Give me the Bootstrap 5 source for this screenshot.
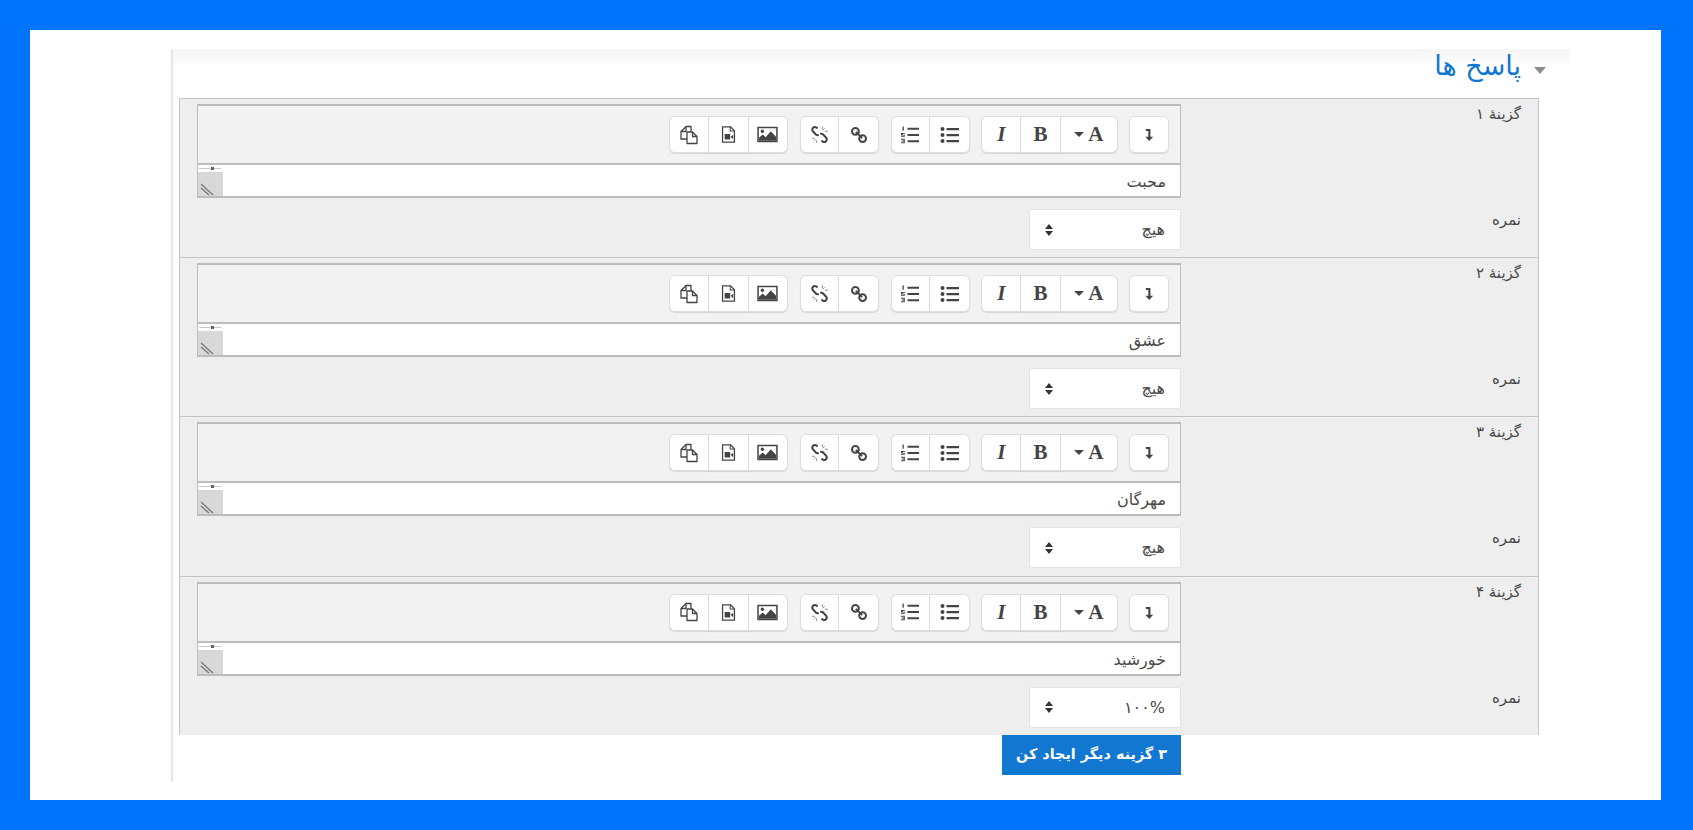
<!DOCTYPE html>
<html lang="fa" dir="rtl">
<head>
<meta charset="utf-8">
<title>پاسخ ها</title>
<link href="https://cdn.jsdelivr.net/npm/bootstrap@5.3.0/dist/css/bootstrap.min.css" rel="stylesheet">
<style>
html,body{height:100%;}
body{background:#0074fb;padding:30px 32px 30px 30px;font-family:"DejaVu Sans",sans-serif;color:#4a4a4a;font-size:15px;overflow:hidden;}
.sheet{background:#fff;height:770px;padding:19px 91px 0 141px;}
.panel-q{height:733px;border-left:2px solid #e6e6e6;background:linear-gradient(#f6f6f6,#fbfbfb 14px,#fff 15px);}
.legend-q{height:49px;padding-right:24px;color:#1177d1;font-size:27px;line-height:34px;}
.legend-q svg{margin:18px 0 0 13px;flex:none;}
.fields{margin:0 31px 0 6px;border-left:1px solid #c4c4c4;border-right:1px solid #c4c4c4;background:#eee;}
.opt{height:159.2px;border-top:1px solid #c4c4c4;padding:5px 0 0 17px;}
.lab{width:357px;flex:none;padding-right:17px;line-height:20px;}
.lab-grade{padding-top:12px;margin-top:0;}
.ed{width:984px;flex:none;border:1px solid #bcbcbc;border-width:2px 1px 2px 1px;}
.tools{height:59px;background:#f2f2f2;border-bottom:2px solid #bcbcbc;padding:10px 11px 0 0;gap:11.5px;}
.tool{width:39.7px;height:37px;padding:0;background:#fff;color:#444;border:1px solid #dedede;box-shadow:0 1px 1px rgba(0,0,0,.12);display:flex;align-items:center;justify-content:center;font-family:"Liberation Serif",serif;font-size:21px;line-height:1;}
.btn-group>.btn.tool+.btn.tool{margin-left:0;border-left-width:0;}
.tool-wide{width:57px;gap:4px;}
.caret-a{border-top:5px solid #444;border-left:5px solid transparent;border-right:5px solid transparent;}
.ed-body{height:31px;background:#fff;}
.ed-text{padding:3px 14px 0 0;line-height:28px;font-size:16px;}
.grip{flex:none;width:25px;height:31px;display:block;}
.grade{width:152px;height:41px;margin-top:11px;padding:0 15px 0 10px;border:1px solid #e4e4e4;border-radius:2px;background:#fff url("data:image/svg+xml,%3Csvg xmlns='http://www.w3.org/2000/svg' width='8' height='12'%3E%3Cpath fill='%23333' d='M4 0l4 5H0zM4 12L0 7h8z'/%3E%3C/svg%3E") no-repeat 15px center;appearance:none;color:#4a4a4a;font:16px "DejaVu Sans",sans-serif;}
.more-wrap{padding-right:389px;}
.more{width:179px;height:40px;background:#1177d1;border:0;border-radius:0;color:#fff;font-size:14.4px;font-weight:700;padding:0;}
</style>
</head>
<body>
<svg width="0" height="0" class="d-none">
<defs>
<symbol id="i-copy" viewBox="0 0 20 20"><g fill="none" stroke="currentColor" stroke-width="1.300" stroke-linejoin="round"><path d="M7 1.500h5v6M7 1.500 2 6.500V14h6"/><path d="M7 1.500v5H2"/><path d="M13.500 7H8v11.500h10V11.500z" fill="#fff"/><path d="M13.500 7v4.500H18"/></g></symbol>
<symbol id="i-video" viewBox="0 0 20 20"><path d="M3 1h9.500L17 5.500V19H3z" fill="none" stroke="currentColor" stroke-width="1.500"/><path d="M12 1v5h5" fill="none" stroke="currentColor" stroke-width="1.200"/><path d="M5.500 9.500h6.500v6.500H5.500zM12.500 12.700l3-2.500v5.500z" fill="currentColor"/></symbol>
<symbol id="i-img" viewBox="0 0 22 18"><path d="M1 1.500h20v15H1z" fill="#fff" stroke="currentColor" stroke-width="1.600"/><circle cx="5.500" cy="5.500" r="1.800" fill="currentColor"/><path d="M2 15.500v-3l4-3.500 3 3 5.500-6.500 5.500 6v4z" fill="currentColor"/></symbol>
<symbol id="i-unlink" viewBox="0 0 20 20"><g fill="none" stroke="currentColor" stroke-width="2.200"><path d="M8 3.500 6.500 2.500a2.800 2.800 0 0 0-3.800 3.800l3.500 3.700a2.800 2.800 0 0 0 3 .6"/><path d="M12 16.500l1.500 1a2.800 2.800 0 0 0 3.800-3.800l-3.500-3.700a2.800 2.800 0 0 0-3-.6"/></g><g stroke="#8b8b8b" stroke-width="1"><path d="M13 1.500v3M15.500 3.500l-2 2M19 6.500h-3.500M2 14h3M4 17l2-2M7 19v-3"/></g></symbol>
<symbol id="i-link" viewBox="0 0 20 20"><g fill="none" stroke="currentColor" stroke-width="2.200"><circle cx="6" cy="6" r="3.800"/><circle cx="14" cy="14" r="3.800"/><path d="M6.500 6.500l7 7"/></g></symbol>
<symbol id="i-ol" viewBox="0 0 20 18"><path fill="currentColor" d="M7.500 1.800H19v2H7.500zM7.500 8H19v2H7.500zM7.500 14.200H19v2H7.500zM2.500.6h1.300v4.200H2.500zM1 7h3.800v1H2.800v1h2v1.800H1v-1h2.800v-.5H1zM1 12.800h3.800v4.400H1v-1h2.800v-.7H1.800v-1h2v-.7H1z"/></symbol>
<symbol id="i-ul" viewBox="0 0 20 18"><path fill="currentColor" d="M6.500 2H19v2.200H6.500zM6.500 8H19v2.200H6.500zM6.500 14H19v2.200H6.500z"/><circle cx="2.500" cy="3.100" r="2" fill="currentColor"/><circle cx="2.500" cy="9.100" r="2" fill="currentColor"/><circle cx="2.500" cy="15.100" r="2" fill="currentColor"/></symbol>
<symbol id="i-coll" viewBox="0 0 12 16"><path fill="currentColor" d="M2 2h5v8.500h3L5.700 15 1.500 10.500h3.200V4.200H2z"/></symbol>
<symbol id="i-grip" viewBox="0 0 25 31"><rect width="25" height="31" fill="#fff"/><rect y="7" width="25" height="24" fill="#d8d8d8"/><path d="M1 3.500h22" stroke="#c8c8c8"/><rect x="13" y="2" width="3" height="3" fill="#666"/><path d="M3 19 15 30M3 23 11 30" stroke="#777" stroke-width="1.200"/></symbol>
</defs>
</svg>
<main class="sheet">
<section class="panel-q">
<h2 class="legend-q d-flex align-items-start m-0 fw-normal"><svg width="12" height="7" viewBox="0 0 12 7" aria-hidden="true"><path d="M0 0h12L6 7z" fill="#8e8e8e"/></svg><span>پاسخ ها</span></h2>
<div class="fields">

<div class="opt">
<div class="d-flex"><div class="lab">گزینهٔ ۱</div><div class="ed">
<div class="tools d-flex justify-content-end" dir="ltr">
<div class="btn-group"><button class="btn tool"><svg width="20" height="20"><use href="#i-copy"/></svg></button><button class="btn tool"><svg width="17" height="17"><use href="#i-video"/></svg></button><button class="btn tool"><svg width="21" height="17"><use href="#i-img"/></svg></button></div>
<div class="btn-group"><button class="btn tool"><svg width="19" height="19"><use href="#i-unlink"/></svg></button><button class="btn tool"><svg width="18" height="18"><use href="#i-link"/></svg></button></div>
<div class="btn-group"><button class="btn tool"><svg width="20" height="18"><use href="#i-ol"/></svg></button><button class="btn tool"><svg width="20" height="18"><use href="#i-ul"/></svg></button></div>
<div class="btn-group"><button class="btn tool fst-italic fw-bold">I</button><button class="btn tool fw-bold">B</button><button class="btn tool tool-wide fw-bold"><span class="caret-a"></span>A</button></div>
<div class="btn-group"><button class="btn tool"><svg width="11" height="15"><use href="#i-coll"/></svg></button></div>
</div>
<div class="ed-body d-flex justify-content-between"><div class="ed-text">محبت</div><svg class="grip"><use href="#i-grip"/></svg></div>
</div></div>
<div class="d-flex"><div class="lab lab-grade">نمره</div><select class="grade"><option>هیچ</option></select></div>
</div>

<div class="opt">
<div class="d-flex"><div class="lab">گزینهٔ ۲</div><div class="ed">
<div class="tools d-flex justify-content-end" dir="ltr">
<div class="btn-group"><button class="btn tool"><svg width="20" height="20"><use href="#i-copy"/></svg></button><button class="btn tool"><svg width="17" height="17"><use href="#i-video"/></svg></button><button class="btn tool"><svg width="21" height="17"><use href="#i-img"/></svg></button></div>
<div class="btn-group"><button class="btn tool"><svg width="19" height="19"><use href="#i-unlink"/></svg></button><button class="btn tool"><svg width="18" height="18"><use href="#i-link"/></svg></button></div>
<div class="btn-group"><button class="btn tool"><svg width="20" height="18"><use href="#i-ol"/></svg></button><button class="btn tool"><svg width="20" height="18"><use href="#i-ul"/></svg></button></div>
<div class="btn-group"><button class="btn tool fst-italic fw-bold">I</button><button class="btn tool fw-bold">B</button><button class="btn tool tool-wide fw-bold"><span class="caret-a"></span>A</button></div>
<div class="btn-group"><button class="btn tool"><svg width="11" height="15"><use href="#i-coll"/></svg></button></div>
</div>
<div class="ed-body d-flex justify-content-between"><div class="ed-text">عشق</div><svg class="grip"><use href="#i-grip"/></svg></div>
</div></div>
<div class="d-flex"><div class="lab lab-grade">نمره</div><select class="grade"><option>هیچ</option></select></div>
</div>

<div class="opt">
<div class="d-flex"><div class="lab">گزینهٔ ۳</div><div class="ed">
<div class="tools d-flex justify-content-end" dir="ltr">
<div class="btn-group"><button class="btn tool"><svg width="20" height="20"><use href="#i-copy"/></svg></button><button class="btn tool"><svg width="17" height="17"><use href="#i-video"/></svg></button><button class="btn tool"><svg width="21" height="17"><use href="#i-img"/></svg></button></div>
<div class="btn-group"><button class="btn tool"><svg width="19" height="19"><use href="#i-unlink"/></svg></button><button class="btn tool"><svg width="18" height="18"><use href="#i-link"/></svg></button></div>
<div class="btn-group"><button class="btn tool"><svg width="20" height="18"><use href="#i-ol"/></svg></button><button class="btn tool"><svg width="20" height="18"><use href="#i-ul"/></svg></button></div>
<div class="btn-group"><button class="btn tool fst-italic fw-bold">I</button><button class="btn tool fw-bold">B</button><button class="btn tool tool-wide fw-bold"><span class="caret-a"></span>A</button></div>
<div class="btn-group"><button class="btn tool"><svg width="11" height="15"><use href="#i-coll"/></svg></button></div>
</div>
<div class="ed-body d-flex justify-content-between"><div class="ed-text">مهرگان</div><svg class="grip"><use href="#i-grip"/></svg></div>
</div></div>
<div class="d-flex"><div class="lab lab-grade">نمره</div><select class="grade"><option>هیچ</option></select></div>
</div>

<div class="opt">
<div class="d-flex"><div class="lab">گزینهٔ ۴</div><div class="ed">
<div class="tools d-flex justify-content-end" dir="ltr">
<div class="btn-group"><button class="btn tool"><svg width="20" height="20"><use href="#i-copy"/></svg></button><button class="btn tool"><svg width="17" height="17"><use href="#i-video"/></svg></button><button class="btn tool"><svg width="21" height="17"><use href="#i-img"/></svg></button></div>
<div class="btn-group"><button class="btn tool"><svg width="19" height="19"><use href="#i-unlink"/></svg></button><button class="btn tool"><svg width="18" height="18"><use href="#i-link"/></svg></button></div>
<div class="btn-group"><button class="btn tool"><svg width="20" height="18"><use href="#i-ol"/></svg></button><button class="btn tool"><svg width="20" height="18"><use href="#i-ul"/></svg></button></div>
<div class="btn-group"><button class="btn tool fst-italic fw-bold">I</button><button class="btn tool fw-bold">B</button><button class="btn tool tool-wide fw-bold"><span class="caret-a"></span>A</button></div>
<div class="btn-group"><button class="btn tool"><svg width="11" height="15"><use href="#i-coll"/></svg></button></div>
</div>
<div class="ed-body d-flex justify-content-between"><div class="ed-text">خورشید</div><svg class="grip"><use href="#i-grip"/></svg></div>
</div></div>
<div class="d-flex"><div class="lab lab-grade">نمره</div><select class="grade"><option>۱۰۰%</option></select></div>
</div>

</div>
<div class="more-wrap"><button class="btn btn-primary more">۳ گزینه دیگر ایجاد کن</button></div>
</section>
</main>
</body>
</html>
